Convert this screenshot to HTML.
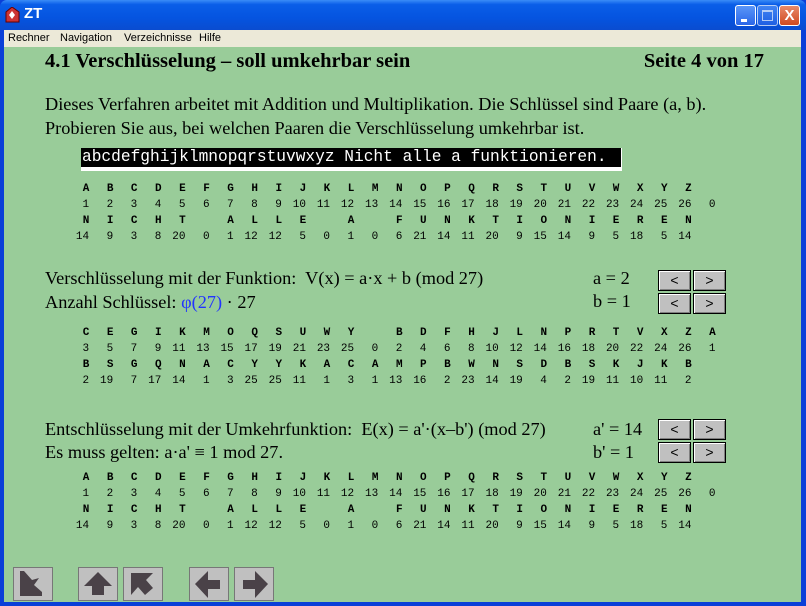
<!DOCTYPE html>
<html><head><meta charset="utf-8"><style>
*{margin:0;padding:0;box-sizing:border-box}
body{width:806px;height:606px;position:relative;overflow:hidden;background:#0a3fd8;font-family:"Liberation Serif",serif}
.title{position:absolute;left:0;top:0;width:806px;height:30px;background:linear-gradient(#3a8cf7,#0a5ee8 15%,#0554e0 60%,#0a4cd0);border-radius:7px 7px 0 0}
.title .t{position:absolute;left:24px;top:5px;color:#fff;font:bold 15px "Liberation Sans",sans-serif}
.wb{position:absolute;top:5px;width:21px;height:21px;border:1px solid #fff;border-radius:3px;background:linear-gradient(#5a96f8,#2a66e8)}
.menu{position:absolute;left:4px;top:30px;width:797px;height:17px;background:#ece9d8;font:11px "Liberation Sans",sans-serif}
.menu span{position:absolute;top:2px}
.content{position:absolute;left:4px;top:47px;width:797px;height:555px;background:#99cc99}
.a{position:absolute;white-space:nowrap}
.h{font-weight:bold;font-size:20.5px}
.p{font-size:18.3px}
.row{position:absolute;left:74px;display:flex;font-family:"Liberation Mono",monospace;font-size:11px}
.row span{width:24.1px;flex:none}
.L span{text-align:center;font-weight:bold}
.N span{text-align:right;padding-right:9px}
.btn{position:absolute;width:33px;height:21px;background:#c0c0c0;border:1px solid #000;box-shadow:inset 1px 1px #fff,inset -1px -1px #808080;font:14px "Liberation Sans",sans-serif;text-align:center;line-height:18px}
.nb{position:absolute;top:567px;width:40px;height:34px;background:#c0c0c0;border:1px solid #777}
</style></head><body>
<div class="title">
<svg style="position:absolute;left:5px;top:7px" width="15" height="16"><polygon points="7,0 14,5 14,15 1,15 1,5" fill="#c33" stroke="#600"/><polygon points="7,4 10,8 7,12 4,8" fill="#fff"/></svg>
<div class="t">ZT</div>
<div class="wb" style="left:735px"><div style="position:absolute;left:5px;top:13px;width:6px;height:3px;background:#fff"></div></div>
<div class="wb" style="left:757px;opacity:.7"><div style="position:absolute;left:4px;top:4px;width:11px;height:11px;border:1px solid #fff;border-top-width:2px"></div></div>
<div class="wb" style="left:779px;background:linear-gradient(#e88a6a,#d04a20);color:#fff;font:bold 15px 'Liberation Sans',sans-serif;text-align:center;line-height:19px">X</div>
</div>
<div class="menu"><span style="left:4px">Rechner</span><span style="left:56px">Navigation</span><span style="left:120px">Verzeichnisse</span><span style="left:195px">Hilfe</span></div>
<div class="content"></div>
<div class="a h" style="left:45px;top:50px">4.1 Verschlüsselung – soll umkehrbar sein</div>
<div class="a h" style="right:42px;top:50px">Seite 4 von 17</div>
<div class="a p" style="left:45px;top:94px">Dieses Verfahren arbeitet mit Addition und Multiplikation. Die Schlüssel sind Paare (a, b).</div>
<div class="a p" style="left:45px;top:118px">Probieren Sie aus, bei welchen Paaren die Verschlüsselung umkehrbar ist.</div>
<div class="a" style="left:81px;top:148px;width:541px;height:23px;background:#fff"></div>
<div class="a" style="left:81px;top:148px;width:540px;height:19px;background:#000;color:#fff;font:16.2px 'Liberation Mono',monospace;line-height:18px;padding:0 0 0 1px">abcdefghijklmnopqrstuvwxyz Nicht alle a funktionieren.</div>

<div class="row L" style="top:183px"><span>A</span><span>B</span><span>C</span><span>D</span><span>E</span><span>F</span><span>G</span><span>H</span><span>I</span><span>J</span><span>K</span><span>L</span><span>M</span><span>N</span><span>O</span><span>P</span><span>Q</span><span>R</span><span>S</span><span>T</span><span>U</span><span>V</span><span>W</span><span>X</span><span>Y</span><span>Z</span></div>
<div class="row N" style="top:199px"><span>1</span><span>2</span><span>3</span><span>4</span><span>5</span><span>6</span><span>7</span><span>8</span><span>9</span><span>10</span><span>11</span><span>12</span><span>13</span><span>14</span><span>15</span><span>16</span><span>17</span><span>18</span><span>19</span><span>20</span><span>21</span><span>22</span><span>23</span><span>24</span><span>25</span><span>26</span><span>0</span></div>
<div class="row L" style="top:215px"><span>N</span><span>I</span><span>C</span><span>H</span><span>T</span><span></span><span>A</span><span>L</span><span>L</span><span>E</span><span></span><span>A</span><span></span><span>F</span><span>U</span><span>N</span><span>K</span><span>T</span><span>I</span><span>O</span><span>N</span><span>I</span><span>E</span><span>R</span><span>E</span><span>N</span></div>
<div class="row N" style="top:231px"><span>14</span><span>9</span><span>3</span><span>8</span><span>20</span><span>0</span><span>1</span><span>12</span><span>12</span><span>5</span><span>0</span><span>1</span><span>0</span><span>6</span><span>21</span><span>14</span><span>11</span><span>20</span><span>9</span><span>15</span><span>14</span><span>9</span><span>5</span><span>18</span><span>5</span><span>14</span></div>

<div class="a p" style="left:45px;top:268px">Verschlüsselung mit der Funktion:&nbsp; V(x) = a·x + b (mod 27)</div>
<div class="a p" style="left:45px;top:292px">Anzahl Schlüssel: <span style="color:#2233ff">φ(27)</span> · 27</div>
<div class="a p" style="left:593px;top:268px">a = 2</div>
<div class="a p" style="left:593px;top:291px">b = 1</div>
<div class="btn" style="left:658px;top:270px">&lt;</div><div class="btn" style="left:693px;top:270px">&gt;</div>
<div class="btn" style="left:658px;top:293px">&lt;</div><div class="btn" style="left:693px;top:293px">&gt;</div>

<div class="row L" style="top:327px"><span>C</span><span>E</span><span>G</span><span>I</span><span>K</span><span>M</span><span>O</span><span>Q</span><span>S</span><span>U</span><span>W</span><span>Y</span><span></span><span>B</span><span>D</span><span>F</span><span>H</span><span>J</span><span>L</span><span>N</span><span>P</span><span>R</span><span>T</span><span>V</span><span>X</span><span>Z</span><span>A</span></div>
<div class="row N" style="top:343px"><span>3</span><span>5</span><span>7</span><span>9</span><span>11</span><span>13</span><span>15</span><span>17</span><span>19</span><span>21</span><span>23</span><span>25</span><span>0</span><span>2</span><span>4</span><span>6</span><span>8</span><span>10</span><span>12</span><span>14</span><span>16</span><span>18</span><span>20</span><span>22</span><span>24</span><span>26</span><span>1</span></div>
<div class="row L" style="top:359px"><span>B</span><span>S</span><span>G</span><span>Q</span><span>N</span><span>A</span><span>C</span><span>Y</span><span>Y</span><span>K</span><span>A</span><span>C</span><span>A</span><span>M</span><span>P</span><span>B</span><span>W</span><span>N</span><span>S</span><span>D</span><span>B</span><span>S</span><span>K</span><span>J</span><span>K</span><span>B</span></div>
<div class="row N" style="top:375px"><span>2</span><span>19</span><span>7</span><span>17</span><span>14</span><span>1</span><span>3</span><span>25</span><span>25</span><span>11</span><span>1</span><span>3</span><span>1</span><span>13</span><span>16</span><span>2</span><span>23</span><span>14</span><span>19</span><span>4</span><span>2</span><span>19</span><span>11</span><span>10</span><span>11</span><span>2</span></div>

<div class="a p" style="left:45px;top:419px">Entschlüsselung mit der Umkehrfunktion:&nbsp; E(x) = a'·(x–b') (mod 27)</div>
<div class="a p" style="left:45px;top:442px">Es muss gelten: a·a' ≡ 1 mod 27.</div>
<div class="a p" style="left:593px;top:419px">a' = 14</div>
<div class="a p" style="left:593px;top:442px">b' = 1</div>
<div class="btn" style="left:658px;top:419px">&lt;</div><div class="btn" style="left:693px;top:419px">&gt;</div>
<div class="btn" style="left:658px;top:442px">&lt;</div><div class="btn" style="left:693px;top:442px">&gt;</div>

<div class="row L" style="top:472px"><span>A</span><span>B</span><span>C</span><span>D</span><span>E</span><span>F</span><span>G</span><span>H</span><span>I</span><span>J</span><span>K</span><span>L</span><span>M</span><span>N</span><span>O</span><span>P</span><span>Q</span><span>R</span><span>S</span><span>T</span><span>U</span><span>V</span><span>W</span><span>X</span><span>Y</span><span>Z</span></div>
<div class="row N" style="top:488px"><span>1</span><span>2</span><span>3</span><span>4</span><span>5</span><span>6</span><span>7</span><span>8</span><span>9</span><span>10</span><span>11</span><span>12</span><span>13</span><span>14</span><span>15</span><span>16</span><span>17</span><span>18</span><span>19</span><span>20</span><span>21</span><span>22</span><span>23</span><span>24</span><span>25</span><span>26</span><span>0</span></div>
<div class="row L" style="top:504px"><span>N</span><span>I</span><span>C</span><span>H</span><span>T</span><span></span><span>A</span><span>L</span><span>L</span><span>E</span><span></span><span>A</span><span></span><span>F</span><span>U</span><span>N</span><span>K</span><span>T</span><span>I</span><span>O</span><span>N</span><span>I</span><span>E</span><span>R</span><span>E</span><span>N</span></div>
<div class="row N" style="top:520px"><span>14</span><span>9</span><span>3</span><span>8</span><span>20</span><span>0</span><span>1</span><span>12</span><span>12</span><span>5</span><span>0</span><span>1</span><span>0</span><span>6</span><span>21</span><span>14</span><span>11</span><span>20</span><span>9</span><span>15</span><span>14</span><span>9</span><span>5</span><span>18</span><span>5</span><span>14</span></div>

<div class="nb" style="left:13px"><svg width="38" height="32"><polygon points="6,3 10,3 18,12 25,10 20,17 28,24 28,28 6,28" fill="#4a4248"/></svg></div>
<div class="nb" style="left:78px"><svg width="38" height="32"><polygon points="19,4 33,18 25,18 25,27 13,27 13,18 5,18" fill="#4a4248"/></svg></div>
<div class="nb" style="left:123px"><svg width="38" height="32"><polygon points="7,5 29,5 22,12 29,20 21,27 14,19 7,27" fill="#4a4248"/></svg></div>
<div class="nb" style="left:189px"><svg width="38" height="32"><polygon points="5,16 18,3 18,12 30,12 30,21 18,21 18,30" fill="#4a4248"/></svg></div>
<div class="nb" style="left:234px"><svg width="38" height="32"><polygon points="33,16 20,3 20,12 8,12 8,21 20,21 20,30" fill="#4a4248"/></svg></div>
</body></html>
